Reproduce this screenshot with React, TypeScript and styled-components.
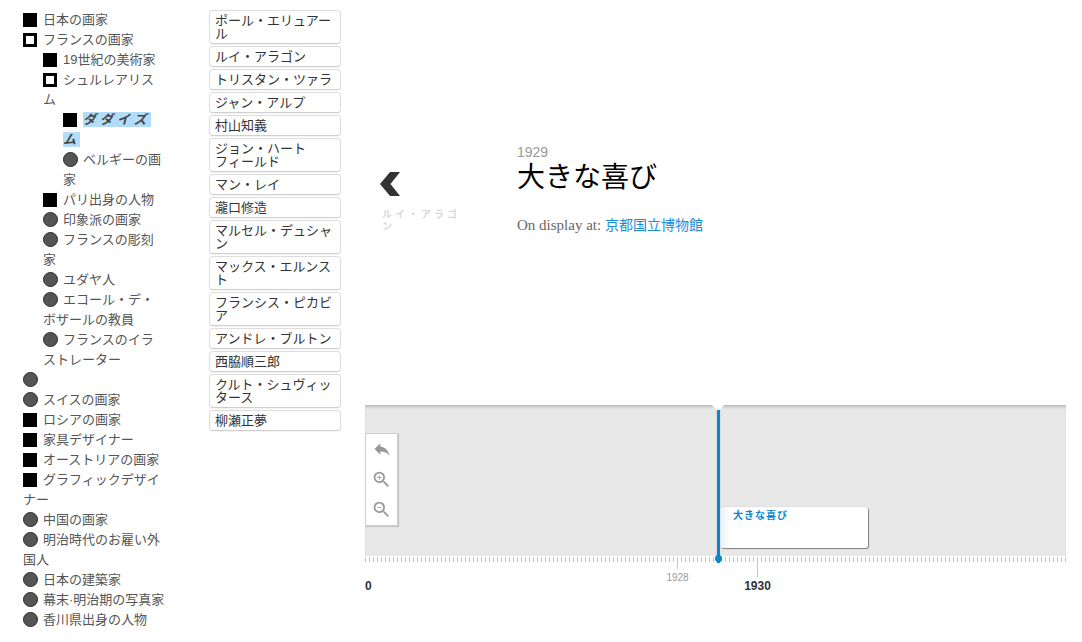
import React from "react";
import styled, { createGlobalStyle } from "styled-components";
import { MdReply, MdZoomIn, MdZoomOut } from "react-icons/md";

const GlobalStyle = createGlobalStyle`
  html, body { margin: 0; padding: 0; background: #fff; }
  body { font-family: "Liberation Sans", "Noto Sans CJK JP", sans-serif; }
`;

const Page = styled.div`
  display: flex;
  align-items: flex-start;
  width: 1082px;
  height: 642px;
  overflow: hidden;
`;

/* ---------- category tree ---------- */

const Tree = styled.ul`
  list-style: none;
  margin: 10px 0 0 23px;
  padding: 0;
  width: 142px;
  flex: none;
  font-size: 13px;
  line-height: 20px;
  color: #555;
`;

const Branch = styled.ul`
  list-style: none;
  margin: 0;
  padding: 0 0 0 20px;
`;

const Node = styled.li`
  margin: 0;
`;

type Kind = "full" | "open" | "dot";

const Icon = styled.span<{ $kind: Kind }>`
  display: inline-block;
  box-sizing: border-box;
  width: ${(p) => (p.$kind === "dot" ? "15px" : "14px")};
  height: ${(p) => (p.$kind === "dot" ? "15px" : "14px")};
  margin-right: ${(p) => (p.$kind === "dot" ? "5px" : "6px")};
  vertical-align: -3px;
  background: ${(p) => (p.$kind === "open" ? "#fff" : p.$kind === "dot" ? "#555" : "#000")};
  border: ${(p) =>
    p.$kind === "open" ? "3px solid #000" : p.$kind === "dot" ? "1px solid #2a2a2a" : "none"};
  border-radius: ${(p) => (p.$kind === "dot" ? "50%" : "0")};
`;

const Current = styled.span`
  background: #b3dcf9;
  color: #444;
  font-weight: bold;
  font-style: italic;
  letter-spacing: 4px;
`;

type TreeItem = { label: string; kind: Kind; current?: boolean; children?: TreeItem[] };

const tree: TreeItem[] = [
  { label: "日本の画家", kind: "full" },
  {
    label: "フランスの画家",
    kind: "open",
    children: [
      { label: "19世紀の美術家", kind: "full" },
      {
        label: "シュルレアリスム",
        kind: "open",
        children: [
          { label: "ダダイズム", kind: "full", current: true },
          { label: "ベルギーの画家", kind: "dot" },
        ],
      },
      { label: "パリ出身の人物", kind: "full" },
      { label: "印象派の画家", kind: "dot" },
      { label: "フランスの彫刻家", kind: "dot" },
      { label: "ユダヤ人", kind: "dot" },
      { label: "エコール・デ・ボザールの教員", kind: "dot" },
      { label: "フランスのイラストレーター", kind: "dot" },
    ],
  },
  { label: "", kind: "dot" },
  { label: "スイスの画家", kind: "dot" },
  { label: "ロシアの画家", kind: "full" },
  { label: "家具デザイナー", kind: "full" },
  { label: "オーストリアの画家", kind: "full" },
  { label: "グラフィックデザイナー", kind: "full" },
  { label: "中国の画家", kind: "dot" },
  { label: "明治時代のお雇い外国人", kind: "dot" },
  { label: "日本の建築家", kind: "dot" },
  { label: "幕末·明治期の写真家", kind: "dot" },
  { label: "香川県出身の人物", kind: "dot" },
];

const TreeNodes: React.FC<{ items: TreeItem[] }> = ({ items }) => (
  <>
    {items.map((it, i) => (
      <Node key={i}>
        <Icon $kind={it.kind} />
        {it.current ? <Current>{it.label}</Current> : it.label}
        {it.children && (
          <Branch>
            <TreeNodes items={it.children} />
          </Branch>
        )}
      </Node>
    ))}
  </>
);

/* ---------- people list ---------- */

const People = styled.div`
  flex: none;
  width: 132px;
  margin: 10px 0 0 44px;
  display: flex;
  flex-direction: column;
  gap: 2px;
`;

const Person = styled.button`
  display: block;
  width: 100%;
  box-sizing: border-box;
  padding: 3px 5px;
  border: 1px solid #ddd;
  border-bottom-color: #cfcfcf;
  border-radius: 4px;
  background: #fff;
  box-shadow: 0 1px 1px rgba(0, 0, 0, 0.05);
  text-align: left;
  font-family: "Liberation Sans", "Noto Sans CJK JP", sans-serif;
  font-size: 13px;
  line-height: 13px;
  color: #333;
  line-break: strict;
  cursor: pointer;
`;

const WJ = "\u2060";

const people = [
  "ポール・エリュアール",
  "ルイ・アラゴン",
  "トリスタン・ツァラ",
  "ジャン・アルプ",
  "村山知義",
  `ジョン・ハートフ${WJ}ィ${WJ}ールド`,
  "マン・レイ",
  "瀧口修造",
  "マルセル・デュシャン",
  "マックス・エルンスト",
  "フランシス・ピカビア",
  "アンドレ・ブルトン",
  "西脇順三郎",
  "クルト・シュヴィッタース",
  "柳瀬正夢",
];

/* ---------- story pane ---------- */

const Pane = styled.section`
  flex: none;
  width: 701px;
  margin-left: 24px;
`;

const Slider = styled.div`
  height: 405px;
  display: flex;
  align-items: flex-start;
`;

const PrevNav = styled.div`
  flex: none;
  width: 90px;
  margin: 172px 0 0 15px;
  cursor: pointer;
`;

const Chevron = styled.svg`
  display: block;
  width: 20px;
  height: 24px;
`;

const PrevTitle = styled.div`
  width: 84px;
  margin: 13px 0 0 2px;
  font-size: 10px;
  line-height: 12px;
  font-weight: bold;
  letter-spacing: 3px;
  color: #dadada;
`;

const Slide = styled.div`
  margin: 143px 0 0 47px;
`;

const SlideDate = styled.div`
  font-size: 14px;
  line-height: 18px;
  color: #999;
`;

const Headline = styled.h2`
  margin: 0;
  font-size: 28px;
  line-height: 34px;
  font-weight: normal;
  color: #000;
`;

const Display = styled.p`
  margin: 19px 0 0;
  font-family: "Liberation Serif", "Noto Sans CJK JP", serif;
  font-size: 15px;
  line-height: 20px;
  color: #666;
`;

const Place = styled.a`
  font-family: "Noto Sans CJK JP", sans-serif;
  font-size: 14px;
  color: #1a8cd8;
  text-decoration: none;
`;

/* ---------- timeline navigation ---------- */

const Nav = styled.div`
  position: relative;
`;

const Band = styled.div`
  position: relative;
  height: 151px;
  background: #e8e8e8;
  box-shadow: inset 0 3px 3px -1px rgba(0, 0, 0, 0.2);
`;

const Toolbar = styled.div`
  position: absolute;
  left: 0;
  top: 28px;
  width: 31px;
  padding: 0 0 1px;
  display: flex;
  flex-direction: column;
  align-items: center;
  background: #fff;
  border: 1px solid #cfcfcf;
  box-shadow: 1px 1px 1px rgba(0, 0, 0, 0.15);
`;

const ToolButton = styled.div`
  width: 31px;
  height: 30px;
  display: flex;
  align-items: center;
  justify-content: center;
  color: #999;
  cursor: pointer;
`;

const Flag = styled.div`
  position: absolute;
  left: 355px;
  top: 102px;
  width: 148px;
  height: 41px;
  box-sizing: border-box;
  padding: 2px 0 0 13px;
  background: linear-gradient(to right, #eef3f7 0, #fff 12px);
  border-radius: 3px;
  box-shadow: 1px 1px 1px rgba(0, 0, 0, 0.45), 0 0 1px rgba(0, 0, 0, 0.25);
  font-size: 10px;
  line-height: 14px;
  font-weight: bold;
  letter-spacing: 1px;
  color: #0a86d0;
`;

const Notch = styled.div`
  position: absolute;
  left: 347px;
  top: 0;
  width: 0;
  height: 0;
  border-left: 6px solid transparent;
  border-right: 6px solid transparent;
  border-top: 7px solid #fff;
  z-index: 2;
`;

const MarkerLine = styled.div`
  position: absolute;
  left: 352px;
  top: 5px;
  width: 3px;
  height: 153px;
  background: #0a86d0;
  box-shadow: 0 0 3px rgba(0, 0, 0, 0.12);
  z-index: 2;
`;

const MarkerDot = styled.div`
  position: absolute;
  left: 350px;
  top: 150px;
  width: 7px;
  height: 7px;
  border-radius: 50%;
  background: #0a86d0;
  z-index: 3;
`;

const Axis = styled.div`
  position: relative;
  height: 48px;
  overflow: hidden;
`;

const MinorTicks = styled.div`
  margin-top: 1px;
  height: 5px;
  background: repeating-linear-gradient(to right, #c4c4c4 0 1px, transparent 1px 4px);
`;

const MajorTick = styled.div<{ $long?: boolean }>`
  position: absolute;
  top: 6px;
  width: 1px;
  height: ${(p) => (p.$long ? "15px" : "7px")};
  background: #c4c4c4;
`;

const YearLabel = styled.div<{ $major?: boolean }>`
  position: absolute;
  top: ${(p) => (p.$major ? "23px" : "16px")};
  transform: translateX(-50%);
  font-size: ${(p) => (p.$major ? "12px" : "10px")};
  line-height: ${(p) => (p.$major ? "14px" : "12px")};
  font-weight: ${(p) => (p.$major ? "bold" : "normal")};
  color: ${(p) => (p.$major ? "#333" : "#999")};
  white-space: nowrap;
`;

const EdgeLabel = styled.div`
  position: absolute;
  left: 0;
  top: 23px;
  font-size: 12px;
  line-height: 14px;
  font-weight: bold;
  color: #333;
`;

const PX_PER_YEAR = 40;
const ORIGIN = 1920;
const yearX = (y: number) => (y - ORIGIN) * PX_PER_YEAR - 8;

const axisYears = [
  { year: 1928, major: false },
  { year: 1930, major: true },
];

export default function App() {
  return (
    <>
      <GlobalStyle />
      <Page>
        <Tree>
          <TreeNodes items={tree} />
        </Tree>

        <People>
          {people.map((p) => (
            <Person key={p}>{p}</Person>
          ))}
        </People>

        <Pane>
          <Slider>
            <PrevNav>
              <Chevron viewBox="0 0 20 24">
                <polygon points="10,0 20,0 10.5,12 20,24 10,24 0,12" fill="#333" />
              </Chevron>
              <PrevTitle>ルイ・アラゴン</PrevTitle>
            </PrevNav>
            <Slide>
              <SlideDate>1929</SlideDate>
              <Headline>大きな喜び</Headline>
              <Display>
                On display at: <Place href="#">京都国立博物館</Place>
              </Display>
            </Slide>
          </Slider>

          <Nav>
            <Band>
              <Toolbar>
                <ToolButton>
                  <MdReply size={20} />
                </ToolButton>
                <ToolButton>
                  <MdZoomIn size={21} />
                </ToolButton>
                <ToolButton>
                  <MdZoomOut size={21} />
                </ToolButton>
              </Toolbar>
              <Flag>大きな喜び</Flag>
            </Band>
            <Axis>
              <MinorTicks />
              <EdgeLabel>0</EdgeLabel>
              {axisYears.map((a) => (
                <React.Fragment key={a.year}>
                  <MajorTick $long={a.major} style={{ left: yearX(a.year) }} />
                  <YearLabel $major={a.major} style={{ left: yearX(a.year) + 0.5 }}>
                    {a.year}
                  </YearLabel>
                </React.Fragment>
              ))}
            </Axis>
            <Notch />
            <MarkerLine />
            <MarkerDot />
          </Nav>
        </Pane>
      </Page>
    </>
  );
}
